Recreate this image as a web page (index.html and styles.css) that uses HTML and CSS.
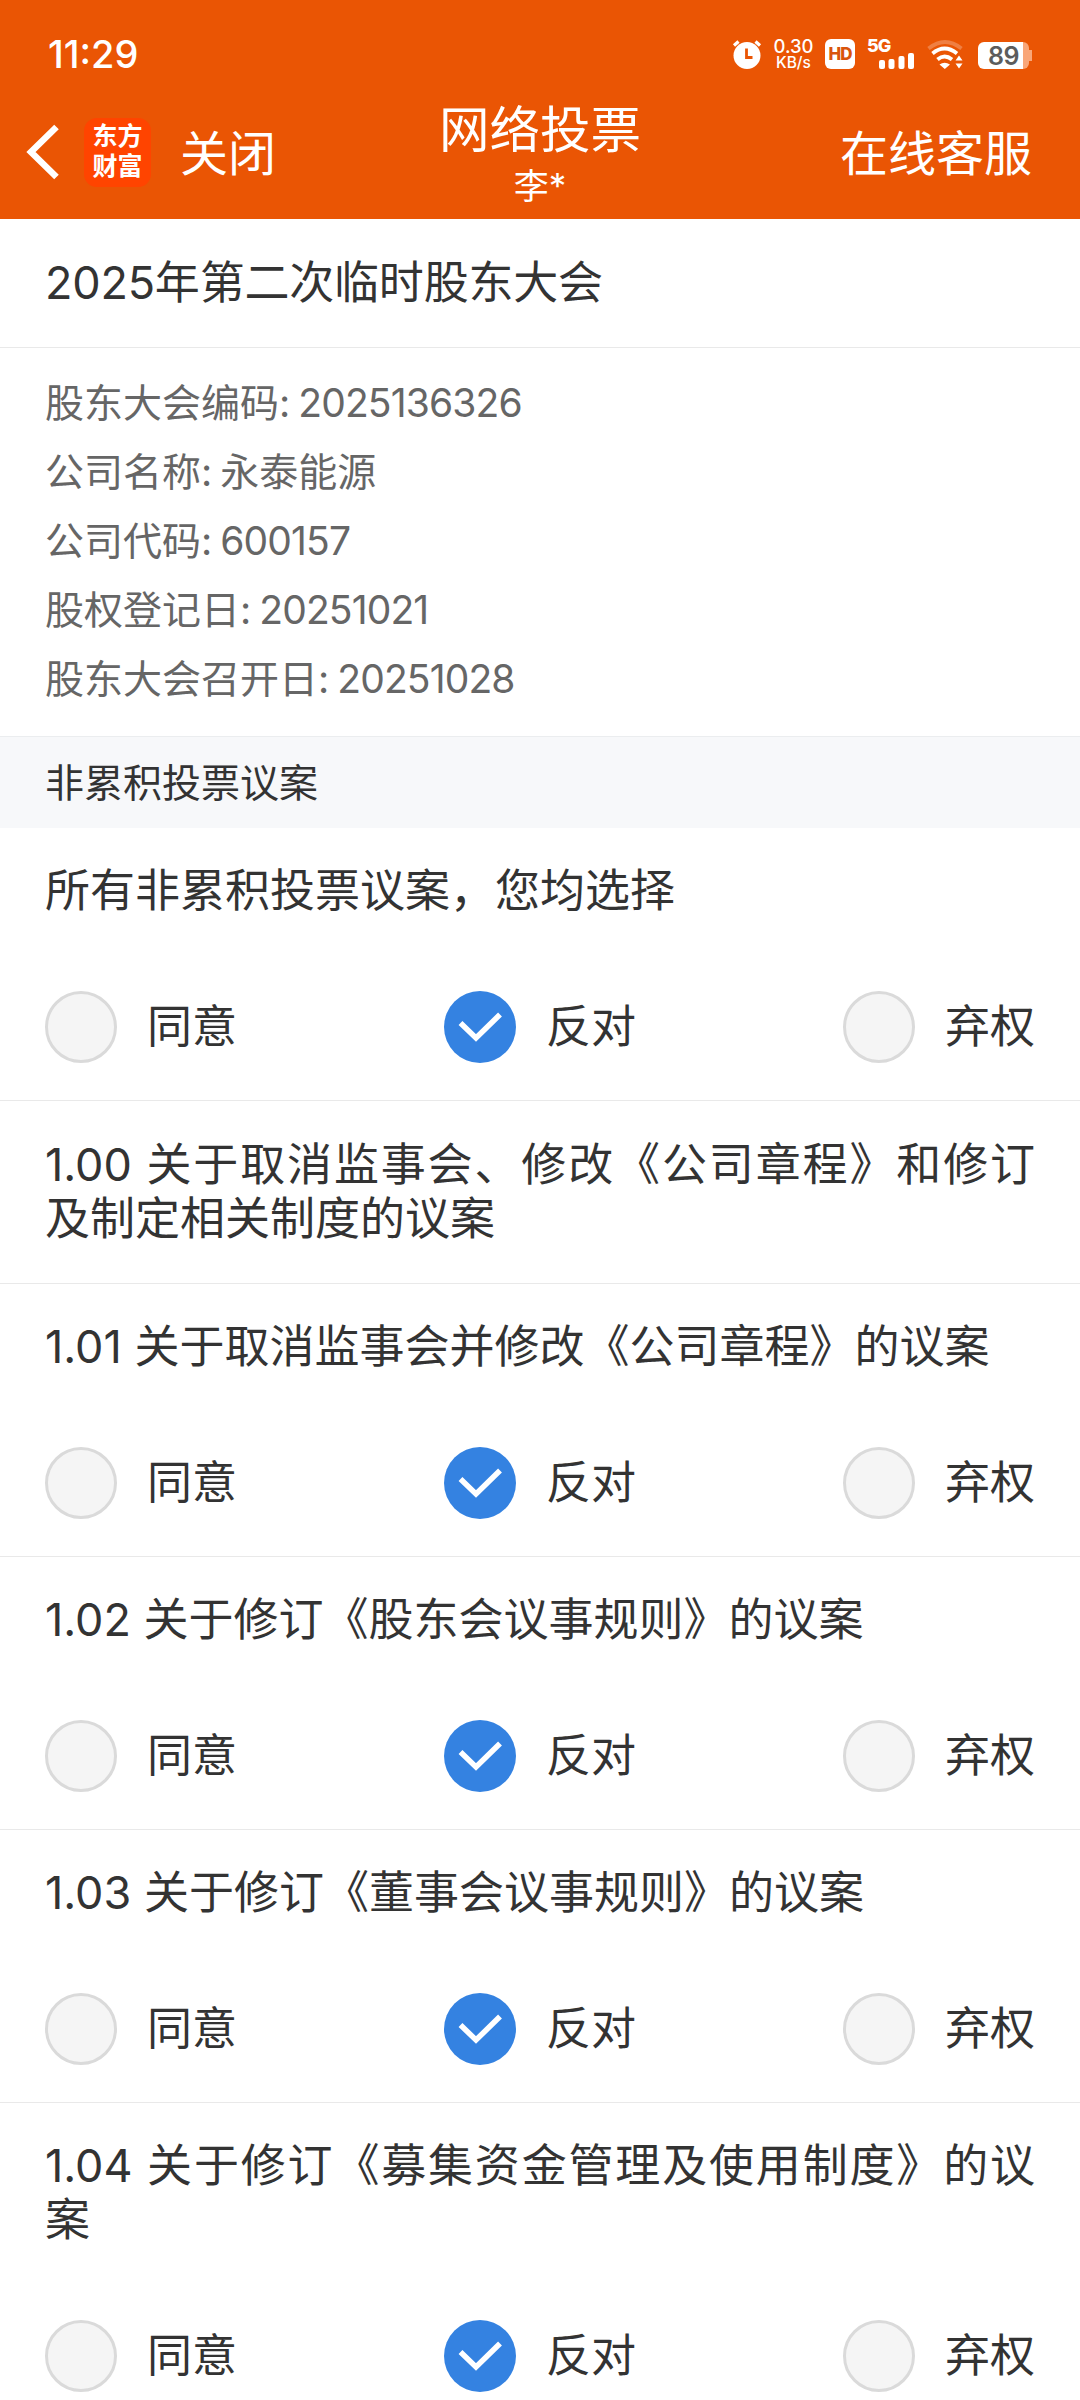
FILE: index.html
```html
<!DOCTYPE html>
<html lang="zh-CN">
<head>
<meta charset="utf-8">
<title>网络投票</title>
<link rel="stylesheet" href="styles.css">
</head>
<body>
<svg class="defs" width="0" height="0" aria-hidden="true">
  <symbol id="check" viewBox="0 0 72 72"><path d="M16.500 32 L32 47 L56 23.500" fill="none" stroke="#fff" stroke-width="5.500"/></symbol>
</svg>
<header class="header">
  <div class="status">
    <span class="clock">11:29</span>
    <div class="status-icons">
      <svg width="30" height="30" viewBox="0 0 30 30">
        <circle cx="15" cy="16.500" r="13.500" fill="#fff"/>
        <path d="M2 6.500 L6.500 2.500 M28 6.500 L23.500 2.500" stroke="#fff" stroke-width="3.200"/>
        <path d="M14.500 9.500 V18.500 H20.500" fill="none" stroke="#ea5504" stroke-width="2.800"/>
      </svg>
      <div class="speed"><span class="speed-value">0.30</span><span class="speed-unit">KB/s</span></div>
      <span class="hd">HD</span>
      <div class="signal">
        <span class="net">5G</span>
        <svg class="bars" width="36" height="16" viewBox="0 0 36 16" fill="#fff"><rect x="0" y="7" width="6" height="9" rx="2"/><rect x="9.500" y="6" width="6" height="10" rx="2"/><rect x="19.500" y="3" width="6" height="13" rx="2"/><rect x="29" y="0" width="6" height="16" rx="2"/></svg>
      </div>
      <svg width="36" height="30" viewBox="0 0 36 30">
        <g fill="none" stroke="#fff" stroke-width="3.800">
          <path d="M1.500 9.500 Q18 -3.500 34.500 9.500" opacity=".25"/>
          <path d="M5.500 14.500 Q17.500 4.500 30 14.500"/>
          <path d="M10.500 20.500 Q17.500 14.500 25 20.500"/>
        </g>
        <path d="M12.500 25.500 Q17.500 22 23 25.500 L17.800 30 Z M28.500 21.500 L32 16.500 L35.500 21.500 Z M28.500 24.500 L32 29.500 L35.500 24.500 Z" fill="#fff"/>
      </svg>
      <div class="battery"><span class="battery-level">89</span></div>
    </div>
  </div>
  <nav class="nav">
    <div class="nav-left">
      <svg class="back" width="33" height="56" viewBox="0 0 33 56"><path d="M30.500 3 L5 28 L30.500 53" fill="none" stroke="#fff" stroke-width="6.500"/></svg>
      <div class="logo"><span>东方</span><span>财富</span></div>
      <span class="close">关闭</span>
    </div>
    <div class="nav-title"><h1>网络投票</h1><span>李*</span></div>
    <span class="service">在线客服</span>
  </nav>
</header>
<main>
  <h2 class="meeting">2025年第二次临时股东大会</h2>
  <section class="info">
    <p>股东大会编码<span class="colon">: </span><span class="num">2025136326</span></p>
    <p>公司名称<span class="colon">: </span>永泰能源</p>
    <p>公司代码<span class="colon">: </span><span class="num">600157</span></p>
    <p>股权登记日<span class="colon">: </span><span class="num">20251021</span></p>
    <p>股东大会召开日<span class="colon">: </span><span class="num">20251028</span></p>
  </section>
  <h3 class="group">非累积投票议案</h3>
  <section class="item">
    <p class="item-title">所有非累积投票议案，您均选择</p>
    <div class="options">
      <label class="option"><i class="radio"></i>同意</label>
      <label class="option"><i class="radio on"><svg><use href="#check"/></svg></i>反对</label>
      <label class="option"><i class="radio"></i>弃权</label>
    </div>
  </section>
  <section class="item heading">
    <p class="item-title">1.00 关于取消监事会、修改《公司章程》和修订及制定相关制度的议案</p>
  </section>
  <section class="item">
    <p class="item-title">1.01 关于取消监事会并修改《公司章程》的议案</p>
    <div class="options">
      <label class="option"><i class="radio"></i>同意</label>
      <label class="option"><i class="radio on"><svg><use href="#check"/></svg></i>反对</label>
      <label class="option"><i class="radio"></i>弃权</label>
    </div>
  </section>
  <section class="item">
    <p class="item-title">1.02 关于修订《股东会议事规则》的议案</p>
    <div class="options">
      <label class="option"><i class="radio"></i>同意</label>
      <label class="option"><i class="radio on"><svg><use href="#check"/></svg></i>反对</label>
      <label class="option"><i class="radio"></i>弃权</label>
    </div>
  </section>
  <section class="item">
    <p class="item-title">1.03 关于修订《董事会议事规则》的议案</p>
    <div class="options">
      <label class="option"><i class="radio"></i>同意</label>
      <label class="option"><i class="radio on"><svg><use href="#check"/></svg></i>反对</label>
      <label class="option"><i class="radio"></i>弃权</label>
    </div>
  </section>
  <section class="item">
    <p class="item-title">1.04 关于修订《募集资金管理及使用制度》的议案</p>
    <div class="options">
      <label class="option"><i class="radio"></i>同意</label>
      <label class="option"><i class="radio on"><svg><use href="#check"/></svg></i>反对</label>
      <label class="option"><i class="radio"></i>弃权</label>
    </div>
  </section>
</main>
</body>
</html>
```
FILE: styles.css
```css
* { box-sizing: border-box; margin: 0; padding: 0; }
html, body { height: 2400px; overflow: hidden; }
body {
  width: 1080px;
  background: #fff;
  color: #333;
  font-family: Inter, "Noto Sans CJK SC", sans-serif;
  font-size: 45px;
  line-height: 54px;
  text-spacing-trim: space-all;
}
h1, h2, h3 { font-weight: 400; }
svg { display: block; }
.defs { position: absolute; }
.num { letter-spacing: -0.022em; }
.colon { letter-spacing: -1.5px; }

.header { height: 219px; background: #ea5504; color: #fff; }
.status {
  height: 108px;
  padding: 0 48px;
  display: flex;
  align-items: center;
  justify-content: space-between;
}
.clock { font-size: 38px; font-weight: 500; }
.status-icons { display: flex; align-items: center; gap: 12px; }
.speed {
  width: 39px;
  display: flex;
  flex-direction: column;
  align-items: center;
  font-weight: 500;
  white-space: nowrap;
}
.speed-value { font-size: 18.5px; line-height: 17px; }
.speed-unit { font-size: 15.5px; line-height: 15px; }
.hd {
  width: 30px;
  height: 30px;
  border-radius: 6px;
  background: #fff;
  color: #d9540c;
  font-size: 17px;
  font-weight: 800;
  line-height: 30px;
  text-align: center;
  letter-spacing: -1px;
}
.signal {
  width: 48px;
  height: 30px;
  display: flex;
  flex-direction: column;
}
.net { font-size: 18px; font-weight: 800; line-height: 14px; letter-spacing: -1px; }
.bars { margin-left: 12px; }
.battery {
  width: 54px;
  height: 27px;
  margin: 2px 0 0 3px;
  padding-right: 3px;
  display: flex;
  align-items: center;
  background: linear-gradient(#f9a678, #f9a678) right center / 4px 11px no-repeat;
}
.battery-level {
  width: 51px;
  height: 27px;
  border-radius: 6px;
  background: linear-gradient(90deg, #fff 45px, #f9a678 45px);
  color: #5c5c5c;
  font-size: 25px;
  font-weight: 600;
  line-height: 28px;
  text-align: center;
  letter-spacing: -0.5px;
}

.nav {
  height: 111px;
  padding: 0 48px 0 26px;
  display: grid;
  grid-template-columns: 1fr auto 1fr;
  align-items: start;
}
.nav-left { display: flex; align-items: center; height: 88px; }
.logo {
  width: 67px;
  height: 69px;
  margin-left: 25px;
  padding-top: 3px;
  border-radius: 13px;
  background: #ff4400;
  display: flex;
  flex-direction: column;
  align-items: center;
  font-size: 25px;
  font-weight: 700;
  line-height: 30px;
}
.close { margin-left: 29px; font-size: 48px; padding-top: 3px; }
.nav-title { display: flex; flex-direction: column; align-items: center; margin-right: -22px; }
.nav-title h1 { font-size: 50.5px; line-height: 44px; }
.nav-title span { font-size: 35px; line-height: 68px; }
.service { justify-self: end; font-size: 48px; line-height: 91px; }

.meeting {
  height: 129px;
  padding-left: 45px;
  border-bottom: 1px solid #e9e9e9;
  font-size: 45px;
  line-height: 128px;
  letter-spacing: -0.2px;
}
.info {
  height: 388px;
  padding: 20px 45px;
  color: #666;
  font-size: 39px;
  line-height: 69px;
}
.group {
  height: 92px;
  padding-left: 45px;
  border-top: 1px solid #ebedef;
  background: #f7f8fa;
  font-size: 39px;
  line-height: 91px;
}
.item { padding: 36px 45px 37px; border-bottom: 1px solid #e9e9e9; }
.item.heading { padding: 37px 45px; }
.item-title { text-align: justify; }
.options { margin-top: 73px; display: flex; justify-content: space-between; }
.option { display: flex; align-items: center; gap: 30px; }
.radio {
  width: 72px;
  height: 72px;
  border: 3px solid #dadada;
  border-radius: 50%;
  background: #f5f5f5;
}
.radio.on { border: 0; background: #3482e1; }
.radio svg { width: 72px; height: 72px; }
```
